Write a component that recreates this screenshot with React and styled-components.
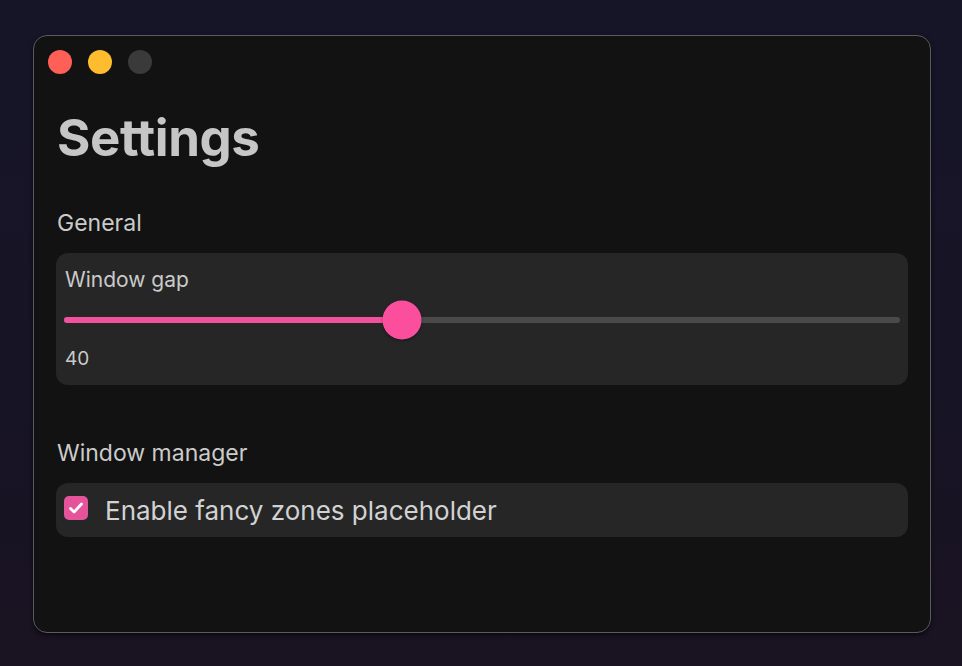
import React, { useState } from 'react';
import styled, { createGlobalStyle } from 'styled-components';

const GlobalStyle = createGlobalStyle`
  html, body {
    margin: 0;
    padding: 0;
    height: 100%;
  }
  body {
    background: linear-gradient(180deg, #161528 0%, #171425 60%, #1a1322 100%);
    font-family: Inter, "Liberation Sans", sans-serif;
    overflow: hidden;
  }
`;

const Desktop = styled.div`
  width: 962px;
  height: 666px;
  padding: 35px 0 0 33px;
  box-sizing: border-box;
`;

const Window = styled.div`
  width: 898px;
  height: 598px;
  box-sizing: border-box;
  background: #121212;
  border: 1px solid #5b5b5d;
  border-radius: 14px;
  box-shadow: 0 2px 4px rgba(0, 0, 0, 0.6);
  display: flex;
  flex-direction: column;
`;

const TitleBar = styled.div`
  display: flex;
  gap: 16px;
  padding: 14px 0 0 14px;
`;

const Light = styled.span`
  width: 24px;
  height: 24px;
  border-radius: 50%;
  background: ${(p) => p.color};
`;

const Content = styled.div`
  display: flex;
  flex-direction: column;
  padding: 0 22px;
`;

const Title = styled.h1`
  margin: 34px 0 0 1px;
  font-size: 51px;
  font-weight: 700;
  color: #c6c6c6;
  letter-spacing: -0.4px;
  line-height: 60px;
`;

const SectionLabel = styled.div`
  margin: ${(p) => p.top}px 0 0 1px;
  font-size: 23px;
  color: #cbcbcb;
  line-height: 28px;
`;

const Card = styled.div`
  margin-top: 16px;
  background: #262626;
  border-radius: 12px;
  padding: ${(p) => (p.compact ? '0 8px' : '14px 8px 13px 8px')};
  display: flex;
  flex-direction: ${(p) => (p.compact ? 'row' : 'column')};
  align-items: ${(p) => (p.compact ? 'center' : 'stretch')};
  height: ${(p) => (p.compact ? '54px' : 'auto')};
  box-sizing: border-box;
`;

const CardLabel = styled.div`
  margin-left: 1px;
  font-size: 21px;
  color: #cacaca;
  line-height: 26px;
`;

const SliderRow = styled.div`
  height: 40px;
  margin-top: 7px;
  display: flex;
  align-items: center;
`;

const Track = styled.div`
  position: relative;
  width: 100%;
  height: 6px;
  border-radius: 3px;
  background: #4a4a4a;
`;

const Fill = styled.div`
  height: 100%;
  border-radius: 3px;
  background: #f2519c;
`;

const Thumb = styled.div`
  position: absolute;
  top: 50%;
  width: 39px;
  height: 39px;
  border-radius: 50%;
  background: #fb4f9d;
  transform: translate(-50%, -50%);
  box-shadow: 0 1px 3px rgba(0, 0, 0, 0.4);
`;

const Value = styled.div`
  margin: 6px 0 0 1px;
  font-size: 19px;
  color: #cacaca;
  line-height: 26px;
`;

const Check = styled.span`
  width: 24px;
  height: 24px;
  margin-top: -4px;
  border-radius: 5px;
  background: #e5539b;
  display: flex;
  align-items: center;
  justify-content: center;
  flex-shrink: 0;
`;

const CheckLabel = styled.span`
  margin-left: 17px;
  font-size: 26px;
  color: #d2d2d2;
`;

function Slider({ value, max }) {
  const frac = value / max;
  // thumb stays inside the track, like a native range input
  const pos = `calc(19.5px + ${frac} * (100% - 39px))`;
  return (
    <SliderRow>
      <Track>
        <Fill style={{ width: pos }} />
        <Thumb style={{ left: pos }} />
      </Track>
    </SliderRow>
  );
}

export default function App() {
  const [gap] = useState(40);

  return (
    <Desktop>
      <GlobalStyle />
      <Window>
        <TitleBar>
          <Light color="#fe5f57" />
          <Light color="#febc2e" />
          <Light color="#3a3a3a" />
        </TitleBar>
        <Content>
          <Title>Settings</Title>
          <SectionLabel top={41}>General</SectionLabel>
          <Card>
            <CardLabel>Window gap</CardLabel>
            <Slider value={gap} max={100} />
            <Value>{gap}</Value>
          </Card>
          <SectionLabel top={54}>Window manager</SectionLabel>
          <Card compact>
            <Check>
              <svg width="18" height="18" viewBox="0 0 18 18" fill="none">
                <path d="M3.5 9.5l3.6 3.6L14.5 5" stroke="#fff" strokeWidth="2.8" strokeLinecap="round" strokeLinejoin="round" />
              </svg>
            </Check>
            <CheckLabel>Enable fancy zones placeholder</CheckLabel>
          </Card>
        </Content>
      </Window>
    </Desktop>
  );
}
